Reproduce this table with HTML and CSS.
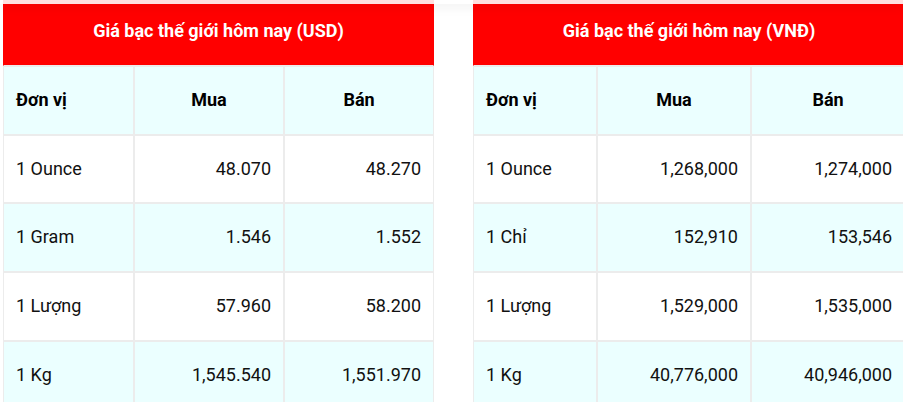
FILE: index.html
```html
<!DOCTYPE html>
<html lang="vi">
<head>
<meta charset="utf-8">
<title>Giá bạc thế giới hôm nay</title>
<link rel="stylesheet" href="styles.css">
</head>
<body>
<div class="topbar"></div>
<div class="wrap">
  <table class="price usd">
    <colgroup><col class="c1"><col class="c2"><col class="c3"></colgroup>
    <thead>
      <tr><th class="title" colspan="3">Giá bạc thế giới hôm nay (USD)</th></tr>
      <tr class="alt"><th class="unit">Đơn vị</th><th>Mua</th><th>Bán</th></tr>
    </thead>
    <tbody>
      <tr><td class="unit">1 Ounce</td><td>48.070</td><td>48.270</td></tr>
      <tr class="alt"><td class="unit">1 Gram</td><td>1.546</td><td>1.552</td></tr>
      <tr><td class="unit">1 Lượng</td><td>57.960</td><td>58.200</td></tr>
      <tr class="alt"><td class="unit">1 Kg</td><td>1,545.540</td><td>1,551.970</td></tr>
    </tbody>
  </table>
  <table class="price vnd">
    <colgroup><col class="c1"><col class="c2"><col class="c3"></colgroup>
    <thead>
      <tr><th class="title" colspan="3">Giá bạc thế giới hôm nay (VNĐ)</th></tr>
      <tr class="alt"><th class="unit">Đơn vị</th><th>Mua</th><th>Bán</th></tr>
    </thead>
    <tbody>
      <tr><td class="unit">1 Ounce</td><td>1,268,000</td><td>1,274,000</td></tr>
      <tr class="alt"><td class="unit">1 Chỉ</td><td>152,910</td><td>153,546</td></tr>
      <tr><td class="unit">1 Lượng</td><td>1,529,000</td><td>1,535,000</td></tr>
      <tr class="alt"><td class="unit">1 Kg</td><td>40,776,000</td><td>40,946,000</td></tr>
    </tbody>
  </table>
</div>
</body>
</html>
```

FILE: styles.css
```css
html, body {
  margin: 0;
  padding: 0;
  background: #fff;
  overflow: hidden;
}
body {
  font-family: Roboto, "Noto Sans", "Liberation Sans", sans-serif;
  color: #111;
}
.topbar {
  position: fixed;
  top: 0;
  left: 0;
  right: 0;
  height: 4px;
  background: rgba(255, 255, 255, 0.88);
  box-shadow: 0 1px 12px rgba(0, 0, 0, 0.13);
  z-index: 10;
}
.wrap {
  display: flex;
  gap: 39px;
  padding-left: 3px;
  margin-top: -3px;
  width: 1000px;
}
.price {
  flex: 0 0 auto;
  width: 431px;
  border-collapse: separate;
  border-spacing: 0;
  table-layout: fixed;
  font-size: 18px;
  line-height: 1.6;
}
.usd .c1 { width: 131px; }
.usd .c2 { width: 150px; }
.usd .c3 { width: 150px; }
.vnd { width: 432px; }
.vnd .c1 { width: 124px; }
.vnd .c2 { width: 154px; }
.vnd .c3 { width: 154px; }
.price th,
.price td {
  border: 1px solid #ececec;
  padding: 19px 12px;
  text-align: right;
  white-space: nowrap;
}
.price th {
  font-weight: 700;
  color: #000;
  text-align: center;
}
.price .unit {
  text-align: left;
}
.price .title {
  background: #ff0000;
  color: #fff;
  border-color: #ff0000 #ff0000 #ececec #ff0000;
  text-align: center;
}
.price tr.alt th,
.price tr.alt td {
  background: #ebffff;
}
```
